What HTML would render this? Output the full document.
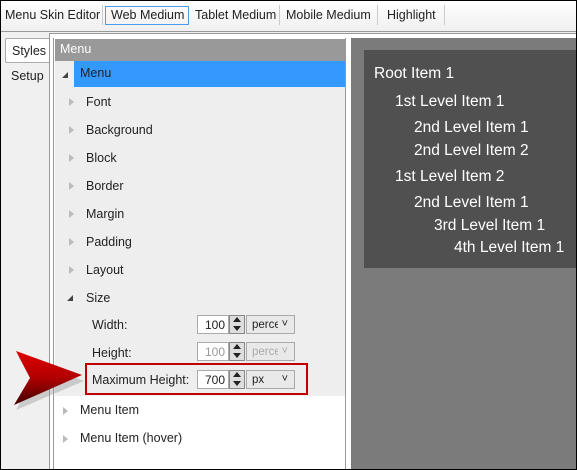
<!DOCTYPE html><html><head><style>
*{box-sizing:border-box;margin:0;padding:0}
body{width:577px;height:470px;position:relative;overflow:hidden;font-family:"Segoe UI","Liberation Sans",sans-serif;font-size:12.5px;color:#222;background:#f0f0f0}
.a{position:absolute}
.tb{left:0;top:0;width:577px;height:32px;background:linear-gradient(#fff,#f0f0f0);border-bottom:1px solid #999}
.tb span{position:absolute;top:6px;height:19px;line-height:19px}
.sep{position:absolute;top:5px;width:1px;height:20px;background:#ccc}
.row{position:absolute;left:86px;height:20px;line-height:20px;margin-top:1px}
.tri{position:absolute;width:0;height:0;border-top:4px solid transparent;border-bottom:4px solid transparent;border-left:5px solid #bbb}
.dn{position:absolute;width:0;height:0;border-left:6px solid transparent;border-bottom:6px solid #444}
.in{position:absolute;left:197px;width:32px;height:19px;background:#fff;border:1px solid #aaa;text-align:right;padding-right:3px;line-height:18px;font-size:12px}
.sp{position:absolute;left:229px;width:16px;height:19px;border:1px solid #888;background:#ddd}
.sp:before{content:"";position:absolute;left:3px;top:1px;border-left:4px solid transparent;border-right:4px solid transparent;border-bottom:5px solid #222}
.sp:after{content:"";position:absolute;left:3px;top:10px;border-left:4px solid transparent;border-right:4px solid transparent;border-top:5px solid #222}
.dd{position:absolute;left:246px;width:49px;height:19px;border:1px solid #aaa;background:#e9e9e9;padding-left:5px;line-height:18px;font-size:11.5px}
.dd b{font-weight:normal;display:block;width:26px;overflow:hidden;white-space:nowrap}
.dd:after{content:"˅";position:absolute;right:6px;top:-1px;font-size:11px}
.pv{color:#fff;font-family:"Liberation Sans",sans-serif;font-size:15.5px;position:absolute;margin-top:1px}
</style></head><body>
<div class="a tb">
<span style="left:5px">Menu Skin Editor</span><div class="sep" style="left:102px"></div>
<span style="left:105px;width:84px;border:1px solid #4a9de8;padding-left:5px;line-height:17px">Web Medium</span>
<span style="left:195px">Tablet Medium</span><div class="sep" style="left:279px"></div>
<span style="left:286px">Mobile Medium</span><div class="sep" style="left:377px"></div>
<span style="left:387px">Highlight</span><div class="sep" style="left:444px"></div>
</div>
<div class="a" style="left:5px;top:38px;width:45px;height:25px;background:#fff;border:1px solid #aaa;border-right:none;border-radius:2px 0 0 2px;padding:5px 0 0 6px">Styles</div>
<div class="a" style="left:11px;top:69px">Setup</div>
<div class="a" style="left:49px;top:33px;width:528px;height:437px;border-left:1px solid #999;border-top:1px solid #999;background:#fff"></div>
<div class="a" style="left:53px;top:38px;width:293px;height:432px;border-left:1px solid #999;border-right:1px solid #999;background:#fff"></div>
<div class="a" style="left:55px;top:39px;width:290px;height:357px;background:#eee"></div>
<div class="a" style="left:55px;top:39px;width:290px;height:22px;background:#999;color:#fff;padding:3px 0 0 5px">Menu</div>
<div class="a" style="left:74px;top:61px;width:271px;height:26px;background:#3399ff;padding:5px 0 0 6px">Menu</div>
<div class="dn" style="left:62px;top:72px"></div>
<div class="tri" style="left:69px;top:98px"></div><div class="row" style="top:91px">Font</div>
<div class="tri" style="left:69px;top:126px"></div><div class="row" style="top:119px">Background</div>
<div class="tri" style="left:69px;top:154px"></div><div class="row" style="top:147px">Block</div>
<div class="tri" style="left:69px;top:182px"></div><div class="row" style="top:175px">Border</div>
<div class="tri" style="left:69px;top:210px"></div><div class="row" style="top:203px">Margin</div>
<div class="tri" style="left:69px;top:238px"></div><div class="row" style="top:231px">Padding</div>
<div class="tri" style="left:69px;top:266px"></div><div class="row" style="top:259px">Layout</div>
<div class="dn" style="left:67px;top:295px"></div><div class="row" style="top:287px">Size</div>
<div class="row" style="left:92px;top:314px">Width:</div>
<div class="in" style="top:315px">100</div><div class="sp" style="top:315px"></div><div class="dd" style="top:315px"><b>perce</b></div>
<div class="row" style="left:92px;top:342px">Height:</div>
<div class="in" style="top:342px;color:#999">100</div><div class="sp" style="top:342px"></div><div class="dd" style="top:342px;color:#aaa"><b>perce</b></div>
<div class="row" style="left:92px;top:369px">Maximum Height:</div>
<div class="in" style="top:370px">700</div><div class="sp" style="top:370px"></div><div class="dd" style="top:370px"><b>px</b></div>
<div class="a" style="left:85px;top:363px;width:223px;height:32px;border:2px solid #c00000"></div>
<div class="tri" style="left:63px;top:407px"></div><div class="row" style="left:80px;top:399px">Menu Item</div>
<div class="tri" style="left:63px;top:435px"></div><div class="row" style="left:80px;top:427px">Menu Item (hover)</div>
<svg class="a" style="left:10px;top:345px" width="75" height="68"><defs><linearGradient id="g" x1="0" y1="0" x2="0" y2="1"><stop offset="0" stop-color="#e00000"/><stop offset="0.5" stop-color="#b00000"/><stop offset="1" stop-color="#400000"/></linearGradient></defs>
<polygon points="6,8 72,33 4,62 20,33" fill="#888" opacity=".35" transform="translate(2,3)"/>
<polygon points="6,6 72,30 4,60 20,33" fill="url(#g)"/></svg>
<div class="a" style="left:351px;top:38px;width:226px;height:432px;background:#7b7b7b"></div>
<div class="a" style="left:364px;top:50px;width:213px;height:218px;background:#505050"></div>
<div class="pv" style="left:374px;top:64px">Root Item 1</div>
<div class="pv" style="left:395px;top:92px">1st Level Item 1</div>
<div class="pv" style="left:414px;top:118px">2nd Level Item 1</div>
<div class="pv" style="left:414px;top:141px">2nd Level Item 2</div>
<div class="pv" style="left:395px;top:167px">1st Level Item 2</div>
<div class="pv" style="left:414px;top:193px">2nd Level Item 1</div>
<div class="pv" style="left:434px;top:216px">3rd Level Item 1</div>
<div class="pv" style="left:454px;top:238px">4th Level Item 1</div>
<div class="a" style="left:0;top:0;width:577px;height:470px;border:1px solid #000;pointer-events:none"></div>
</body></html>
